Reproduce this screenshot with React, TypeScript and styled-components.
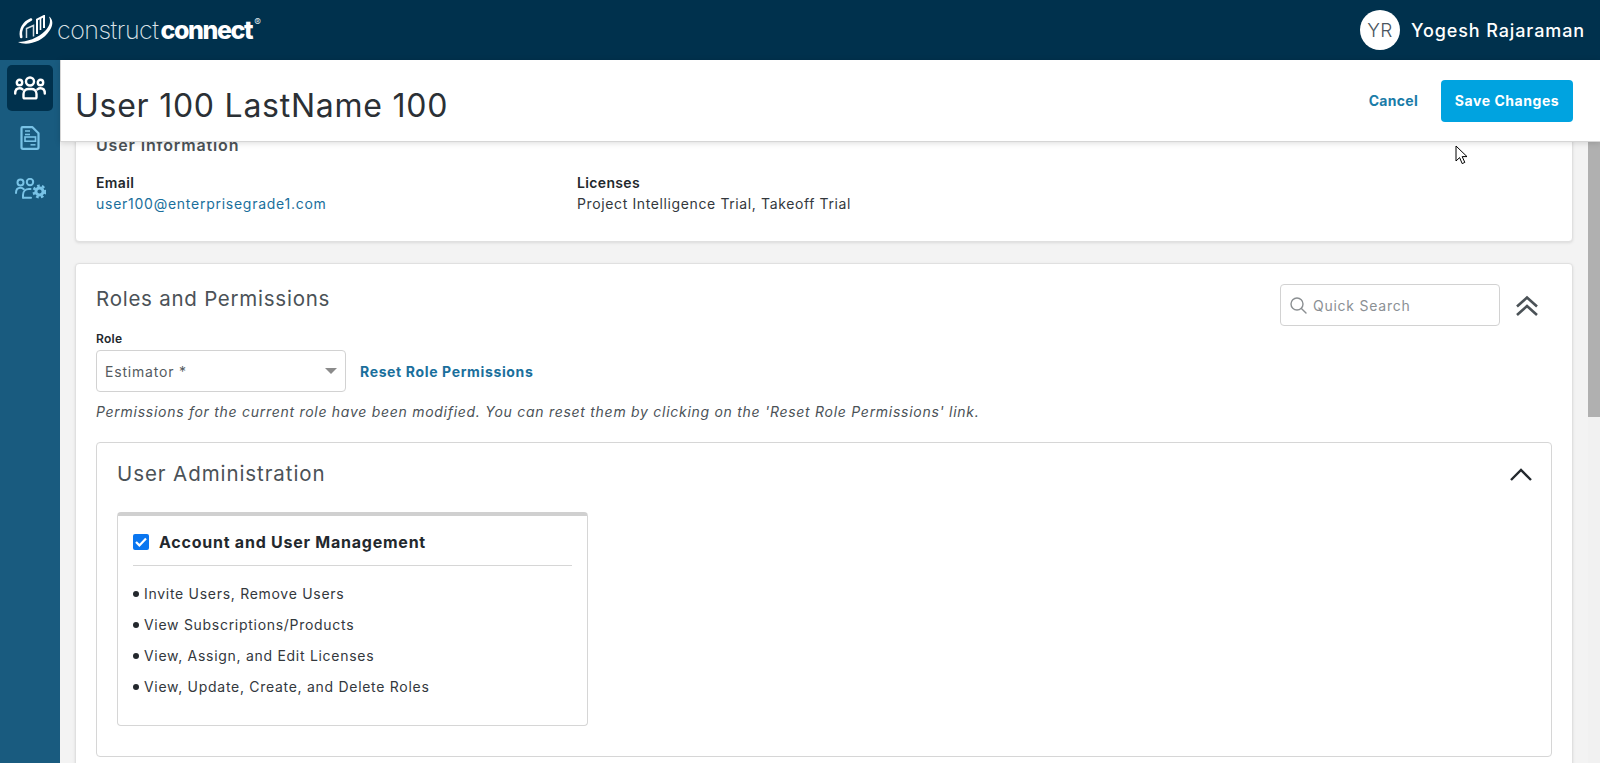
import React from 'react';
import styled, { createGlobalStyle } from 'styled-components';

const GlobalStyle = createGlobalStyle`
  html, body, #root {
    margin: 0;
    height: 100%;
    overflow: hidden;
  }
  * {
    box-sizing: border-box;
  }
  body {
    font-family: 'Inter', 'Liberation Sans', sans-serif;
    color: #23282d;
    background: #f3f3f3;
  }
`;

const Page = styled.div`
  position: relative;
  height: 763px;
  display: flex;
  flex-direction: column;
  overflow: hidden;
`;

const TopBar = styled.header`
  flex: 0 0 60px;
  background: #00314d;
  display: flex;
  align-items: center;
  justify-content: space-between;
  padding: 0 15px 0 18px;
`;

const Logo = styled.div`
  display: flex;
  align-items: center;
  color: #fff;
`;

const LogoLight = styled.span`
  margin-left: 3px;
  font-size: 25px;
  font-weight: 200;
  letter-spacing: -0.5px;
  color: #dbe3e8;
`;

const LogoBold = styled.span`
  margin-left: 2px;
  font-size: 25px;
  font-weight: 800;
  letter-spacing: -1.4px;
`;

const LogoMark = styled.sup`
  font-size: 10px;
  align-self: flex-start;
  margin: 2px 0 0 2px;
  line-height: 1;
  color: #dbe3e8;
`;

const UserBox = styled.div`
  display: flex;
  align-items: center;
  gap: 11px;
`;

const Avatar = styled.div`
  width: 40px;
  height: 40px;
  border-radius: 50%;
  background: #fff;
  color: #4a5560;
  font-size: 19px;
  font-weight: 300;
  letter-spacing: 0.5px;
  display: flex;
  align-items: center;
  justify-content: center;
`;

const UserName = styled.span`
  color: #fff;
  font-size: 18px;
  font-weight: 500;
  letter-spacing: 0.9px;
`;

const Body = styled.div`
  flex: 1;
  display: flex;
  min-height: 0;
`;

const Sidebar = styled.nav`
  flex: 0 0 60px;
  background: #195b7f;
  display: flex;
  flex-direction: column;
  align-items: center;
  padding-top: 5px;
  gap: 4px;
`;

const NavItem = styled.div<{ $active?: boolean }>`
  width: 46px;
  height: 46px;
  border-radius: 5px;
  display: flex;
  align-items: center;
  justify-content: center;
  background: ${(props) => (props.$active ? '#00314d' : 'transparent')};
  color: ${(props) => (props.$active ? '#ffffff' : '#79c3e6')};
`;

const Main = styled.main`
  flex: 1;
  min-width: 0;
  display: flex;
  flex-direction: column;
`;

const EditHeader = styled.div`
  position: relative;
  z-index: 2;
  flex: 0 0 82px;
  background: #fff;
  border-bottom: 1px solid #d6d6d6;
  border-left: 1px solid #d6d6d6;
  box-shadow: 0 1px 6px rgba(0, 0, 0, 0.14);
  display: flex;
  align-items: center;
  justify-content: space-between;
  padding: 0 27px 0 14px;
`;

const PageTitle = styled.h1`
  margin: 9px 0 0;
  font-size: 32px;
  font-weight: 400;
  letter-spacing: 0.75px;
  color: #2b3035;
`;

const HeaderActions = styled.div`
  display: flex;
  align-items: center;
  gap: 23px;
`;

const LinkButton = styled.span`
  font-size: 14px;
  font-weight: 700;
  letter-spacing: 0.3px;
  color: #1a7ca8;
`;

const SaveButton = styled.button`
  width: 132px;
  height: 42px;
  border: none;
  border-radius: 4px;
  background: #00a3e0;
  color: #fff;
  font-family: inherit;
  font-size: 14px;
  font-weight: 700;
  letter-spacing: 0.55px;
`;

const ScrollRow = styled.div`
  flex: 1;
  min-height: 0;
  display: flex;
`;

const Content = styled.div`
  flex: 1;
  min-width: 0;
  overflow: hidden;
  padding: 0 15px;
`;

const Scrollbar = styled.div`
  flex: 0 0 12px;
  background: #f1f1f1;
`;

const ScrollThumb = styled.div`
  height: 275px;
  background: #b0b0b0;
`;

const Card = styled.section`
  background: #fff;
  border: 1px solid #e0e0e0;
  border-radius: 4px;
  box-shadow: 0 1px 3px rgba(0, 0, 0, 0.1);
`;

const InfoCard = styled(Card)`
  margin-top: -21px;
  height: 121px;
  padding: 13px 20px 0;
`;

const InfoTitle = styled.h3`
  margin: 0 0 18px;
  font-size: 16px;
  line-height: 20px;
  font-weight: 600;
  letter-spacing: 0.85px;
  color: #4b5257;
`;

const InfoGrid = styled.div`
  display: grid;
  grid-template-columns: 481px 1fr;
`;

const FieldLabel = styled.div`
  font-size: 14px;
  line-height: 20px;
  font-weight: 600;
  letter-spacing: 0.35px;
  color: #23282d;
`;

const FieldValue = styled.div<{ $link?: boolean }>`
  font-size: 14px;
  line-height: 21px;
  letter-spacing: ${(props) => (props.$link ? '0.74px' : '0.62px')};
  color: ${(props) => (props.$link ? '#1a6f9c' : '#33383d')};
`;

const RolesCard = styled(Card)`
  margin-top: 21px;
  padding: 20px 20px 20px;
`;

const RolesTop = styled.div`
  display: flex;
  justify-content: space-between;
  align-items: flex-start;
`;

const RolesTitle = styled.h2`
  margin: 2px 0 0;
  font-size: 20.5px;
  line-height: 26px;
  font-weight: 400;
  letter-spacing: 0.75px;
  color: #4b5257;
`;

const SearchTools = styled.div`
  display: flex;
  align-items: center;
  gap: 15px;
  margin-right: 13px;
`;

const SearchBox = styled.div`
  width: 220px;
  height: 42px;
  border: 1px solid #d2d2d2;
  border-radius: 4px;
  display: flex;
  align-items: center;
  gap: 6px;
  padding-left: 9px;
  font-size: 14px;
  letter-spacing: 0.75px;
  color: #8b9094;
`;

const CollapseAll = styled.span`
  display: flex;
  margin-top: 2px;
`;

const RoleLabel = styled.div`
  margin-top: 5px;
  font-size: 12px;
  line-height: 16px;
  font-weight: 600;
  letter-spacing: 0.3px;
  color: #23282d;
`;

const RoleRow = styled.div`
  display: flex;
  align-items: center;
  gap: 14px;
  margin-top: 3px;
`;

const RoleSelect = styled.div`
  width: 250px;
  height: 42px;
  border: 1px solid #d2d2d2;
  border-radius: 4px;
  display: flex;
  align-items: center;
  justify-content: space-between;
  padding: 0 8px;
  font-size: 14px;
  letter-spacing: 0.8px;
  color: #555b60;
`;

const Caret = styled.span`
  width: 0;
  height: 0;
  border-left: 6px solid transparent;
  border-right: 6px solid transparent;
  border-top: 6px solid #8b8b8b;
`;

const ResetLink = styled(LinkButton)`
  color: #1a6f9c;
  letter-spacing: 0.64px;
`;

const RoleNote = styled.p`
  margin: 11px 0 0;
  font-size: 14px;
  line-height: 18px;
  font-style: italic;
  letter-spacing: 0.72px;
  color: #4b5257;
`;

const SectionCard = styled.div`
  margin-top: 21px;
  height: 315px;
  border: 1px solid #d6d6d6;
  border-radius: 4px;
  padding: 18px 19px 0 20px;
`;

const SectionHead = styled.div`
  display: flex;
  justify-content: space-between;
  align-items: center;
`;

const SectionTitle = styled.h3`
  margin: 0;
  font-size: 20.5px;
  line-height: 26px;
  font-weight: 400;
  letter-spacing: 0.92px;
  color: #4b5257;
`;

const PermissionCard = styled.div`
  width: 471px;
  height: 214px;
  margin-top: 25px;
  border: 1px solid #d6d6d6;
  border-top: 4px solid #d0d0d0;
  border-radius: 4px;
  padding: 16px 15px 0;
`;

const PermissionHead = styled.label`
  display: flex;
  align-items: center;
  gap: 10px;
  padding-bottom: 13px;
  border-bottom: 1px solid #d6d6d6;
  font-size: 16px;
  line-height: 20px;
  font-weight: 700;
  letter-spacing: 0.76px;
  color: #23282d;
`;

const CheckBox = styled.span`
  width: 16px;
  height: 16px;
  border-radius: 2px;
  background: #0a76f0;
  display: flex;
  align-items: center;
  justify-content: center;
`;

const PermissionList = styled.ul`
  list-style: none;
  margin: 12px 0 0;
  padding: 0;
`;

const PermissionItem = styled.li`
  display: flex;
  align-items: center;
  gap: 5px;
  height: 31px;
  font-size: 14px;
  letter-spacing: 0.71px;
  color: #33383d;

  &::before {
    content: '';
    width: 6px;
    height: 6px;
    border-radius: 50%;
    background: #23282d;
  }
`;

const Pointer = styled.svg`
  position: absolute;
  left: 1455px;
  top: 145px;
  z-index: 5;
`;

const LogoIcon = () => (
  <svg width="36" height="31" viewBox="0 0 36 31" fill="none">
    <path d="M0 27C8 31 24 28 32 15C35.5 9.5 35 4 31 1.5C33.5 7 31 12 27 16C20 23 9 27 0 27Z" fill="#fff" />
    <path d="M3.2 22C1.5 14 6 7.5 13 4.5" stroke="#fff" strokeWidth="2.6" strokeLinecap="round" />
    <path d="M8.5 23V13.5L15.5 10.5V21.5" stroke="#d5dee3" strokeWidth="1.5" />
    <path d="M19 19V4.5L26 1V13" stroke="#fff" strokeWidth="2" />
    <path d="M22.5 3V15" stroke="#fff" strokeWidth="1.6" />
  </svg>
);

const UsersIcon = () => (
  <svg width="32" height="24" viewBox="0 0 32 24" fill="none" stroke="currentColor" strokeWidth="2.4">
    <circle cx="16" cy="5.5" r="4" />
    <circle cx="5.5" cy="6.5" r="2.7" />
    <circle cx="26.5" cy="6.5" r="2.7" />
    <path d="M9.5 21V18C9.5 14.5 12 13 14.5 13H17.5C20 13 22.5 14.5 22.5 18V21C22.5 21.8 22 22.4 21.2 22.4H10.8C10 22.4 9.5 21.8 9.5 21Z" />
    <path d="M1.2 17.5C1.2 14 3 12.3 5.5 12.3C6.8 12.3 7.8 12.7 8.6 13.4" strokeLinecap="round" />
    <path d="M30.8 17.5C30.8 14 29 12.3 26.5 12.3C25.2 12.3 24.2 12.7 23.4 13.4" strokeLinecap="round" />
  </svg>
);

const DocumentIcon = () => (
  <svg width="20" height="24" viewBox="0 0 20 24" fill="none" stroke="currentColor" strokeWidth="2.2">
    <path d="M2.5 1.2H12.5L18.5 7.2V21.3C18.5 22.2 17.8 22.8 17 22.8H3C2.2 22.8 1.5 22.2 1.5 21.3V2.2C1.5 1.7 2 1.2 2.5 1.2Z" strokeLinejoin="round" />
    <path d="M5 5H10M5 8.5H10" strokeWidth="1.5" />
    <rect x="5" y="11" width="10.5" height="4.2" strokeWidth="1.6" />
    <path d="M10.5 18.8H15.5" strokeWidth="1.5" />
  </svg>
);

const UsersGearIcon = () => (
  <svg width="31" height="21" viewBox="0 0 31 21" fill="none" stroke="currentColor" strokeWidth="2">
    <circle cx="5.5" cy="4.5" r="3" />
    <circle cx="15" cy="4" r="3.2" />
    <path d="M1 15C1 11.5 3 9.8 5.5 9.8C7 9.8 8 10.4 8.8 11.2" strokeLinecap="round" />
    <path d="M8 19.5V17C8 13.5 10.5 11 14 11H15.5" strokeLinecap="round" />
    <path d="M8 19.8H16" strokeLinecap="round" />
    <circle cx="24.5" cy="13.5" r="3.6" strokeWidth="3" />
    <circle cx="24.5" cy="13.5" r="5.8" strokeWidth="2.4" strokeDasharray="2.6 2.25" />
  </svg>
);

const SearchIcon = () => (
  <svg width="17" height="17" viewBox="0 0 17 17" fill="none" stroke="#8b8f92" strokeWidth="1.4">
    <circle cx="7" cy="7" r="6" />
    <path d="M11.4 11.4L16 16" strokeLinecap="round" />
  </svg>
);

const DoubleChevronIcon = () => (
  <svg width="24" height="22" viewBox="0 0 24 22" fill="none" stroke="#4b5257" strokeWidth="2.6">
    <path d="M2 11.5L12 2.5L22 11.5" />
    <path d="M2 20L12 11L22 20" />
  </svg>
);

const ChevronIcon = () => (
  <svg width="22" height="13" viewBox="0 0 22 13" fill="none" stroke="#23282d" strokeWidth="2.4">
    <path d="M1 12L11 2L21 12" />
  </svg>
);

const CheckIcon = () => (
  <svg width="12" height="10" viewBox="0 0 12 10" fill="none" stroke="#fff" strokeWidth="2.2">
    <path d="M1 5L4.4 8.4L11 1.4" />
  </svg>
);

const permissions = [
  'Invite Users, Remove Users',
  'View Subscriptions/Products',
  'View, Assign, and Edit Licenses',
  'View, Update, Create, and Delete Roles',
];

export default function App() {
  return (
    <Page>
      <GlobalStyle />
      <TopBar>
        <Logo>
          <LogoIcon />
          <LogoLight>construct</LogoLight>
          <LogoBold>connect</LogoBold>
          <LogoMark>®</LogoMark>
        </Logo>
        <UserBox>
          <Avatar>YR</Avatar>
          <UserName>Yogesh Rajaraman</UserName>
        </UserBox>
      </TopBar>
      <Body>
        <Sidebar>
          <NavItem $active><UsersIcon /></NavItem>
          <NavItem><DocumentIcon /></NavItem>
          <NavItem><UsersGearIcon /></NavItem>
        </Sidebar>
        <Main>
          <EditHeader>
            <PageTitle>User 100 LastName 100</PageTitle>
            <HeaderActions>
              <LinkButton>Cancel</LinkButton>
              <SaveButton>Save Changes</SaveButton>
            </HeaderActions>
          </EditHeader>
          <ScrollRow>
            <Content>
              <InfoCard>
                <InfoTitle>User Information</InfoTitle>
                <InfoGrid>
                  <div>
                    <FieldLabel>Email</FieldLabel>
                    <FieldValue $link>user100@enterprisegrade1.com</FieldValue>
                  </div>
                  <div>
                    <FieldLabel>Licenses</FieldLabel>
                    <FieldValue>Project Intelligence Trial, Takeoff Trial</FieldValue>
                  </div>
                </InfoGrid>
              </InfoCard>
              <RolesCard>
                <RolesTop>
                  <RolesTitle>Roles and Permissions</RolesTitle>
                  <SearchTools>
                    <SearchBox>
                      <SearchIcon />
                      Quick Search
                    </SearchBox>
                    <CollapseAll><DoubleChevronIcon /></CollapseAll>
                  </SearchTools>
                </RolesTop>
                <RoleLabel>Role</RoleLabel>
                <RoleRow>
                  <RoleSelect>
                    Estimator *
                    <Caret />
                  </RoleSelect>
                  <ResetLink>Reset Role Permissions</ResetLink>
                </RoleRow>
                <RoleNote>
                  Permissions for the current role have been modified. You can reset them by clicking on the 'Reset Role Permissions' link.
                </RoleNote>
                <SectionCard>
                  <SectionHead>
                    <SectionTitle>User Administration</SectionTitle>
                    <ChevronIcon />
                  </SectionHead>
                  <PermissionCard>
                    <PermissionHead>
                      <CheckBox><CheckIcon /></CheckBox>
                      Account and User Management
                    </PermissionHead>
                    <PermissionList>
                      {permissions.map((item) => (
                        <PermissionItem key={item}>{item}</PermissionItem>
                      ))}
                    </PermissionList>
                  </PermissionCard>
                </SectionCard>
              </RolesCard>
            </Content>
            <Scrollbar>
              <ScrollThumb />
            </Scrollbar>
          </ScrollRow>
        </Main>
      </Body>
      <Pointer width="13" height="20" viewBox="0 0 13 20">
        <path d="M1 1V16L4.6 12.6L7.2 18.6L9.8 17.4L7.2 11.6H12L1 1Z" fill="#fff" stroke="#000" strokeWidth="1" />
      </Pointer>
    </Page>
  );
}
